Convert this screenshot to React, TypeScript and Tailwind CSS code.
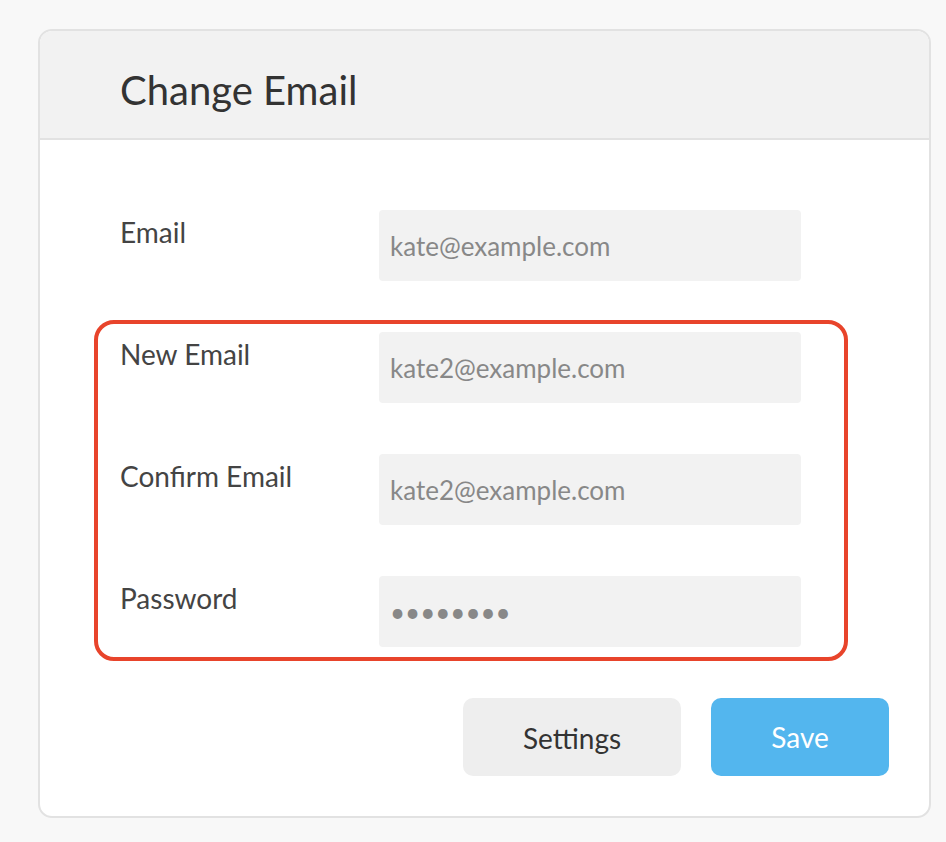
import React from 'react';

const font = { fontFamily: 'Lato, "Open Sans", sans-serif' };

interface FieldProps {
  label: string;
  value: string;
  type?: string;
}

const Field = ({ label, value, type = 'text' }: FieldProps) => (
  <div className="flex items-start">
    <label className="w-[259px] shrink-0 pt-[4px] text-[28px] leading-[36px] text-[#444]">
      {label}
    </label>
    <input
      type={type}
      readOnly
      defaultValue={value}
      className="h-[71px] w-[422px] rounded-[4px] bg-[#f2f2f2] px-[11px] text-[26px] text-[#888] outline-none"
      style={font}
    />
  </div>
);

export default function App() {
  return (
    <div className="min-h-[842px] w-full bg-[#f8f8f8] pt-[29px]" style={font}>
      <div className="ml-[38px] w-[893px] overflow-hidden rounded-[14px] border-2 border-[#e2e2e2] bg-white">
        {/* Header */}
        <div className="flex h-[109px] items-center border-b-2 border-[#e2e2e2] bg-[#f2f2f2] pl-[80px]">
          <h2 className="pt-[10px] text-[40px] leading-none text-[#333]">Change Email</h2>
        </div>

        {/* Body */}
        <div className="pl-[54px] pr-[81px] pt-[70px] pb-[40px]">
          <div className="pl-[26px]">
            <Field label="Email" value="kate@example.com" />
          </div>

          <div className="mt-[39px] flex flex-col gap-[51px] rounded-[20px] border-[4px] border-[#e8442b] pl-[22px] pt-[8px] pb-[10px]">
            <Field label="New Email" value="kate2@example.com" />
            <Field label="Confirm Email" value="kate2@example.com" />
            <Field label="Password" value="12345678" type="password" />
          </div>

          <div className="mt-[37px] -mr-[41px] flex justify-end gap-[30px]">
            <button className="h-[78px] w-[218px] rounded-[10px] bg-[#eeeeee] pt-[2px] text-[28px] text-[#333]">
              Settings
            </button>
            <button className="h-[78px] w-[178px] rounded-[10px] bg-[#53b6ee] text-[28px] text-white">
              Save
            </button>
          </div>
        </div>
      </div>
    </div>
  );
}
